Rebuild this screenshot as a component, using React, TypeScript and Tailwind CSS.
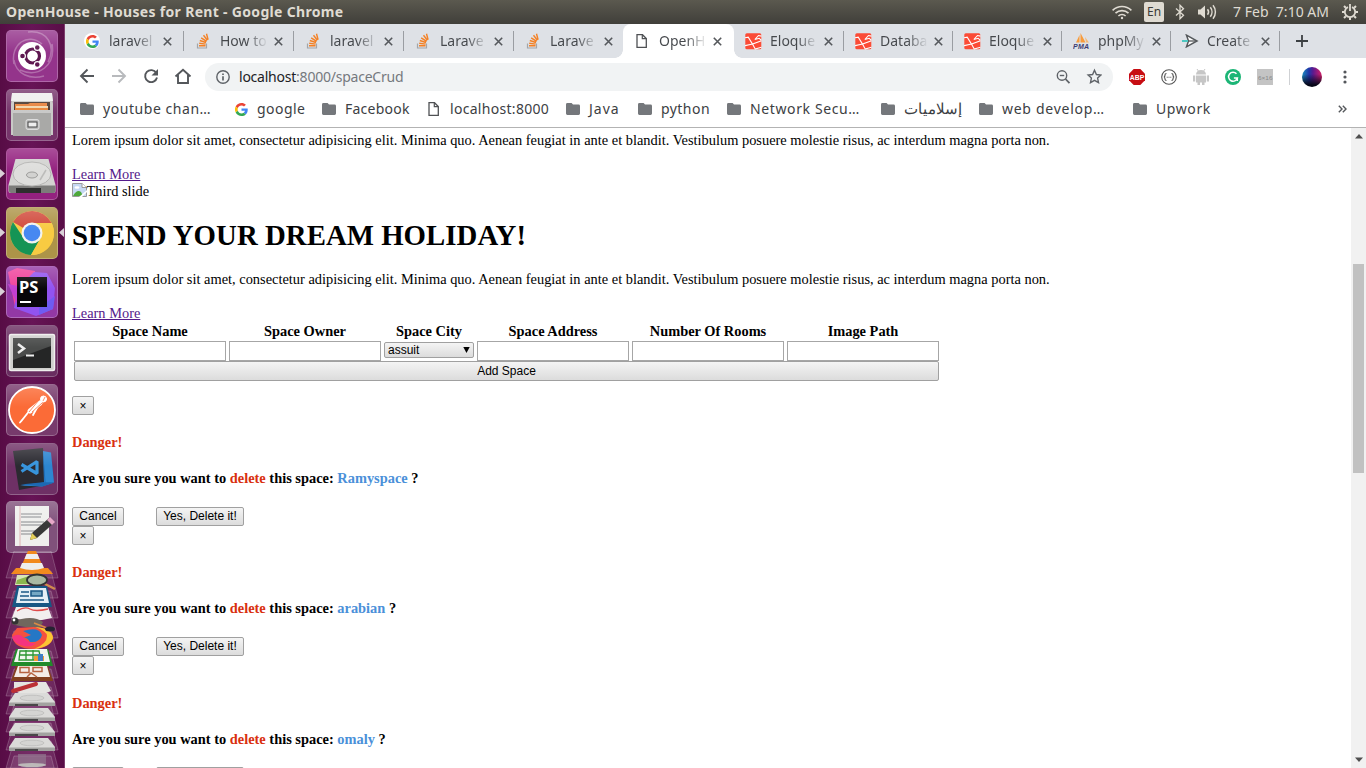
import React from "react";

const ui = "font-['Noto_Sans',sans-serif]";

function GoogleG({ size = 12 }: { size?: number }) {
  return (
    <svg width={size} height={size} viewBox="0 0 48 48" className="block shrink-0">
      <path fill="#EA4335" d="M24 9.5c3.5 0 6.700 1.200 9.200 3.600l6.900-6.900C35.900 2.400 30.500 0 24 0 14.600 0 6.500 5.400 2.600 13.200l8 6.200C12.400 13.700 17.700 9.500 24 9.500z" />
      <path fill="#4285F4" d="M47 24.500c0-1.600-.2-3.100-.4-4.500H24v9h12.900c-.6 3-2.200 5.500-4.700 7.200l7.700 6C44.400 38 47 31.800 47 24.500z" />
      <path fill="#FBBC05" d="M10.500 28.600a14.500 14.500 0 0 1 0-9.200l-8-6.200a24 24 0 0 0 0 21.600z" />
      <path fill="#34A853" d="M24 48c6.500 0 11.900-2.100 15.900-5.800l-7.700-6c-2.200 1.500-4.900 2.300-8.200 2.300-6.300 0-11.600-4.200-13.500-9.900l-8 6.200C6.500 42.600 14.600 48 24 48z" />
    </svg>
  );
}

function StackOverflow() {
  return (
    <svg width="14" height="16" viewBox="0 0 14 16" className="block">
      <path d="M1.500 10.500v4.500h9v-4.500" fill="none" stroke="#a3a6aa" strokeWidth="1.200" />
      <g stroke="#f48024" strokeWidth="1.400">
        <path d="M3 12.700h6.500M3.200 10.300l6.400.8M3.800 7.500l6.200 2M5.200 4.800l5.400 3.600M7.500 2.300l3.900 5M10.500.8l1.600 5.900" />
      </g>
    </svg>
  );
}

function LaravelIcon() {
  return (
    <svg width="17" height="17" viewBox="0 0 17 17" className="-ml-px block">
      <rect x=".3" y=".3" width="16" height="16" rx="1.500" fill="#fb4b36" />
      <path d="M0 4.800l3.200-.6L7.500 11l9-3.200M0 12.600l7.500-1.600 3 5.500M10.200 16l6.300-1.800M9.800 6.500l3.700-4 3 .6M9.800 6.500l4.400-1.200 2 1.800" fill="none" stroke="#fff" strokeWidth="1.100" />
    </svg>
  );
}

function PageIcon() {
  return (
    <svg width="12" height="14" viewBox="0 0 12 14" className="ml-px block">
      <path d="M1 .7h5.500L10.300 4.500v8.800H1z" fill="#fff" stroke="#4f5154" strokeWidth="1.300" />
      <path d="M6.300.7v4h4" fill="none" stroke="#4f5154" strokeWidth="1.200" />
    </svg>
  );
}

function PmaIcon() {
  return (
    <svg width="17" height="16" viewBox="0 0 17 16" className="-ml-px block">
      <path d="M3 9.500L6.500 2v7.500zM7.500 9.500V0l5 9.500z" fill="#f89c3c" />
      <path d="M12 4l4 5.500h-3z" fill="#f5b977" />
      <text x="0" y="15.500" textLength="16" fontSize="7" fontWeight="700" fontStyle="italic" fontFamily="Liberation Sans" fill="#3c3c72">PMA</text>
    </svg>
  );
}

function SendIcon() {
  return (
    <svg width="17" height="14" viewBox="0 0 17 14" className="-ml-px block">
      <path d="M4.500 1.200L15 7 4.500 12.800 6.500 7z" fill="#fff" stroke="#55595c" strokeWidth="1.500" />
      <path d="M3 7h11" stroke="#55595c" strokeWidth="1.300" />
      <path d="M0 7h6" stroke="#4ec6c0" strokeWidth="2" />
    </svg>
  );
}

function Folder() {
  return (
    <svg width="14" height="12" viewBox="0 0 14 12" className="block">
      <path d="M1.400 0h4.200L7 1.500h5.600A1.400 1.400 0 0 1 14 2.900v7.700a1.400 1.400 0 0 1-1.400 1.400H1.400A1.400 1.400 0 0 1 0 10.600V1.400A1.400 1.400 0 0 1 1.400 0z" fill="#74777b" />
    </svg>
  );
}

type Tab = { icon: React.ReactNode; title: string; w: string; active?: boolean; noline?: boolean };

const tabs: Tab[] = [
  {
    icon: <span className="-ml-px flex h-4 w-4 items-center justify-center rounded-full bg-white"><GoogleG size={13} /></span>,
    title: "laravel", w: "w-[111px]",
  },
  { icon: <StackOverflow />, title: "How to", w: "w-[110px]" },
  { icon: <StackOverflow />, title: "laravel", w: "w-[110px]" },
  { icon: <StackOverflow />, title: "Larave", w: "w-[110px]" },
  { icon: <StackOverflow />, title: "Larave", w: "w-[109px]", noline: true },
  { icon: <PageIcon />, title: "OpenH", w: "w-[111px]", active: true },
  { icon: <LaravelIcon />, title: "Eloque", w: "w-[110px]" },
  { icon: <LaravelIcon />, title: "Databa", w: "w-[109px]" },
  { icon: <LaravelIcon />, title: "Eloque", w: "w-[109px]" },
  { icon: <PmaIcon />, title: "phpMy", w: "w-[109px]" },
  { icon: <SendIcon />, title: "Create", w: "w-[109px]" },
];

function TabView({ t }: { t: Tab }) {
  return (
    <div className={`relative flex h-[34px] shrink-0 items-center ${t.w} ${t.active ? "rounded-t-lg bg-white" : ""}`}>
      {t.active && (
        <>
          <span className="absolute bottom-0 -left-2 h-2 w-2 bg-[radial-gradient(circle_at_0_0,transparent_7.500px,#fff_8px)]" />
          <span className="absolute bottom-0 -right-2 h-2 w-2 bg-[radial-gradient(circle_at_100%_0,transparent_7.500px,#fff_8px)]" />
        </>
      )}
      <span className="ml-[12px] flex w-[24px] shrink-0 items-center">{t.icon}</span>
      <span className="mb-[2px] w-[49px] shrink-0 overflow-hidden whitespace-nowrap bg-[linear-gradient(90deg,#45484c_55%,transparent_98%)] bg-clip-text text-[14px] text-transparent">
        {t.title}
      </span>
      <svg width="9" height="9" viewBox="0 0 9 9" className="ml-[5px] shrink-0">
        <path d="M.8.8l7.400 7.400M8.200.8L.8 8.200" stroke="#55585c" strokeWidth="1.600" />
      </svg>
      {!t.active && !t.noline && <span className="ml-auto h-5 w-px bg-[#9a9da2]" />}
    </div>
  );
}

function TopPanel() {
  return (
    <header className="flex h-6 items-center bg-gradient-to-b from-[#5b594f] to-[#403f3a] text-[#dfdbd2]">
      <span className="mb-[2px] ml-[6px] w-[1107px] whitespace-nowrap text-[14px] font-bold tracking-[0.320px]">OpenHouse - Houses for Rent - Google Chrome</span>
      <svg width="20" height="15" viewBox="0 0 20 15" fill="none" stroke="#dfdbd2" strokeWidth="1.600" className="-ml-px">
        <path d="M.6 5.300C6 .2 14 .2 19.400 5.300M3.500 8.200c3.700-3.500 9.300-3.500 13 0M6.400 11c2-1.900 5.200-1.900 7.200 0" />
        <circle cx="10" cy="13" r="1.200" fill="#dfdbd2" stroke="none" />
      </svg>
      <span className="ml-[12px] flex h-5 w-5 items-center justify-center rounded-[2px] bg-[#dfdbd2] text-[12px] leading-none text-[#3c3b37]">En</span>
      <svg width="10" height="16" viewBox="0 0 10 16" fill="none" stroke="#dfdbd2" strokeWidth="1.300" className="ml-[11px]">
        <path d="M1 4.500l7.500 6.800L5 14.800V1.200l3.500 3.500L1 11.500" />
      </svg>
      <svg width="21" height="16" viewBox="0 0 21 16" className="ml-[12px]">
        <path d="M1 5.500h2.500L8 1.500v13l-4.500-4H1z" fill="#dfdbd2" />
        <path d="M10.500 5.300c1.300 1.600 1.300 3.800 0 5.400M13.300 3.300c2.200 2.700 2.200 6.700 0 9.400M16 1.300c3.200 3.900 3.200 9.500 0 13.400" fill="none" stroke="#dfdbd2" strokeWidth="1.500" />
      </svg>
      <span className="mb-[2px] ml-[15px] w-[98px] whitespace-pre text-[14px] tracking-[0.020px]">7 Feb  7:10 AM</span>
      <svg width="18" height="18" viewBox="-9 -9 18 18" className="ml-[10px]" fill="none" stroke="#dfdbd2">
        <path d="M-2-4.800A5.200 5.200 0 1 0 2-4.800M0-8v7" strokeWidth="1.800" />
        <path d="M-4.200-4.200l-1.800-1.800M4.200-4.200L6-6M5.500 0H8M-5.500 0H-8M4.200 4.200L6 6M-4.200 4.200L-6 6M0 5.500V8" strokeWidth="2" />
      </svg>
    </header>
  );
}

function Tile({ children, bg, mb = "mb-[7px]" }: { children: React.ReactNode; bg: string; mb?: string }) {
  return (
    <div className={`relative ml-[6px] h-[52px] w-[52px] shrink-0 overflow-hidden rounded-[5px] border border-white/25 ${bg} ${mb}`}>
      <svg width="52" height="52" viewBox="0 0 52 52" className="-mt-px -ml-px block">{children}</svg>
      <span className="absolute inset-x-0 top-0 h-[22px] bg-gradient-to-b from-white/20 to-transparent" />
    </div>
  );
}

function Launcher() {
  const rows = [551, 571, 591, 611, 631, 651, 669, 687, 705, 723, 741, 756];
  return (
    <aside className="relative flex h-[744px] w-[65px] shrink-0 flex-col overflow-hidden border-r border-[#7d3d6d] bg-gradient-to-r from-[#570c45] via-[#671456] to-[#590e47] pt-[6px]">
      <Tile bg="bg-[#94348b]">
        <g fill="none" stroke="#fff" strokeOpacity=".28" strokeWidth="1.500">
          <path d="M8 34C4 14 22 2 36 14M22 2c20-2 28 14 20 30M46 14c4 22-14 34-32 26M8 30c2 14 16 20 30 16" />
        </g>
        <circle cx="26" cy="26" r="14" fill="#fff" />
        <circle cx="26.500" cy="26" r="7" fill="none" stroke="#5e1750" strokeWidth="3.200" />
        <g fill="#5e1750" stroke="#fff" strokeWidth="1.200"><circle cx="16.500" cy="26" r="2.900" /><circle cx="31.300" cy="17.500" r="2.900" /><circle cx="31.300" cy="34.500" r="2.900" /></g>
      </Tile>
      <Tile bg="bg-[#76356b]">
        <path d="M6 5h40l1 10v31H5V15z" fill="#c9c9c7" />
        <path d="M6 4h40l1 8H5z" fill="#efefed" />
        <rect x="8" y="13" width="36" height="10" fill="#4d3b31" />
        <path d="M9 15h13l2-1h17v8H9z" fill="#e8843e" /><path d="M10 17h32v4H10z" fill="#f3d7ad" /><path d="M10 19h32v2H10z" fill="#e7863b" />
        <path d="M7 21h38v26H7z" fill="#a9a9a7" /><path d="M7 21h38v3H7z" fill="#c9c9c8" />
        <rect x="20" y="30.500" width="13" height="10" rx="2" fill="#bdbdbd" stroke="#ddd" />
        <rect x="22" y="33" width="9" height="5" fill="#eee" stroke="#444" />
      </Tile>
      <Tile bg="bg-[#94217f]">
        <path d="M9.500 11h33l7 26v6q0 2-2 2h-43q-2 0-2-2v-6z" fill="#d3d3d1" />
        <path d="M3 37.500h46.500V43q0 2-2 2h-42.500q-2 0-2-2z" fill="#7c7c7a" />
        <path d="M10 40h25v5H10z" fill="#2e2e2e" />
        <ellipse cx="26" cy="26" rx="19" ry="12" fill="#dededc" stroke="#b5b5b3" />
        <ellipse cx="26" cy="27" rx="5.500" ry="3" fill="#d2d2d0" stroke="#9d9d9b" />
        <path d="M40 22l-6 10" stroke="#bcbcba" strokeWidth="1.500" />
      </Tile>
      <Tile bg="bg-[#ad9448]">
        <circle cx="26" cy="26" r="22" fill="#f8cb42" />
        <path d="M26 26L7 15A22 22 0 0 1 45.600 16H26z" fill="#d14b3d" />
        <path d="M7 15A22 22 0 0 0 25 48l10-17-9-5-8.500 5z" fill="#159455" />
        <path d="M26 16h19.600A22 22 0 0 1 25 48l9.500-17z" fill="#f8cb42" />
        <circle cx="26" cy="26" r="10.500" fill="#f3f3ee" /><circle cx="26" cy="26" r="8.300" fill="#4688f1" />
      </Tile>
      <Tile bg="bg-[#9338a5]">
        <path d="M2 6l9-4 18 3 1 15-21 21z" fill="#f0429b" />
        <path d="M28 6l13 1 8 15-2 21-17 7-22-8 4-20z" fill="#9153f0" />
        <path d="M2 18l10 2v20z" fill="#c23fd0" /><path d="M33 42l16-12-2 13-14 6z" fill="#6e5cf2" />
        <rect x="11" y="11" width="30" height="30" fill="#08060a" />
        <text x="13" y="27" fontFamily="Noto Sans" fontWeight="700" fontSize="16.500" fill="#fff">PS</text>
        <rect x="14" y="35" width="11" height="2" fill="#fff" />
      </Tile>
      <Tile bg="bg-[#692d60]">
        <rect x="3.500" y="9.500" width="45" height="36" rx="1.500" fill="#cfcfcd" stroke="#efefed" strokeWidth="1.500" />
        <rect x="7" y="13" width="38" height="30" fill="#252626" />
        <path d="M7 13h38v8L7 35z" fill="#4a4c4b" />
        <path d="M12 19l6 4.500-6 4.500" fill="none" stroke="#eee" strokeWidth="2.500" /><path d="M20 30.500h8" stroke="#eee" strokeWidth="2" />
      </Tile>
      <Tile bg="bg-[#773a6c]">
        <circle cx="26" cy="26" r="23" fill="#fb6b37" stroke="#fff" strokeWidth="1.800" />
        <g stroke="#fff" fill="none" strokeLinecap="round"><circle cx="37.500" cy="15" r="3" fill="#fff" /><path d="M34 19L24 27" strokeWidth="5" /><path d="M32 22l-5 9M24 26L15 37.500M21 30L14 38.500" strokeWidth="1.800" /></g>
        <path d="M33 16l-10 12M36 19l-10 9M39 13l-2 4" stroke="#fb6b37" strokeWidth=".8" />
      </Tile>
      <Tile bg="bg-[#6e3065]" mb="mb-[6px]">
        <path d="M7 8l30-3 3 37-27 5z" fill="#2b2a31" />
        <path d="M37 8l8 1.500 3 30-12 4-22-1 24-3z" fill="#2d86d0" /><path d="M37 8l2.500 31-25 2.500 22 2 12-4-10-.5z" fill="#1c69b2" />
        <path d="M15.500 21.500l15.500 9V18.500l-15.500 10" fill="none" stroke="#3794dc" strokeWidth="3.200" strokeLinejoin="bevel" />
      </Tile>
      <Tile bg="bg-[#80517b]" mb="-mb-[2px]">
        <path d="M9 5h34v40H9z" fill="#efefed" />
        <path d="M14 5v40" stroke="#dfb3b3" />
        <path d="M15 13h21M15 16h20M15 21h23M15 24h20M15 30h15M15 33h12" stroke="#a9aaac" strokeWidth="1.300" />
        <path d="M24 39l2-7 17-15 5 5-17 15z" fill="#383838" /><path d="M24 39l2-7 5 5z" fill="#e5cf59" /><path d="M41 19l3-3 5 5-3 3z" fill="#e6a6c7" />
      </Tile>
      <svg width="65" height="217" viewBox="0 551 65 217" className="relative block shrink-0">
        {rows.map((y) => (
          <path key={y} d={`M14 ${y}h37l7 27H6z`} fill="#fff" fillOpacity=".1" stroke="#fff" strokeOpacity=".2" />
        ))}
        <path d="M16 568h32l5 6H11z" fill="#f28a1e" /><path d="M28 551h8l8 18q-12 5-24 0z" fill="#f28a1e" />
        <path d="M26.500 554h11l2 5h-15zM22 563h20l2 5q-12 4-24 0z" fill="#eee" />
        <path d="M17 575h26l3 10H15z" fill="#d8e6b8" /><path d="M17 580l12-4 6 8H16z" fill="#8bb64e" />
        <path d="M43 583l12 6" stroke="#d18b4e" strokeWidth="2.500" /><ellipse cx="37" cy="580" rx="10" ry="5.500" fill="#a9b9a3" stroke="#333" strokeWidth="1.800" />
        <path d="M17 586h30l5 21H12z" fill="#175784" /><path d="M19 588h27l3 15H16z" fill="#e5eff6" /><path d="M21 592h8M20 596h9M20 600h24M31 591h11v5H31z" stroke="#1d5987" strokeWidth="1.600" fill="#75a8c4" />
        <path d="M16 607h32l4 11q-20 5-40 0z" fill="#f2eeee" /><path d="M17 611q8-5 13-2t18 0" fill="none" stroke="#df4949" strokeWidth="1.300" />
        <path d="M12 622q20-8 31 0l-3 6q-16 0-28-4z" fill="#70675d" /><circle cx="15" cy="621" r="3.500" fill="#333" /><circle cx="14" cy="620" r="1.400" fill="#fff" />
        <path d="M12 635l5-7 17-1q17 1 19 10-2 11-19 12-21 0-22-14z" fill="#f4513f" /><path d="M35 627q17 1 18 11-2 9-19 11 13-5 13-13 0-5-12-9z" fill="#fbc533" /><path d="M23 631q16-5 19 4-2 8-12 7-3-5-7-4l8-3z" fill="#2577c5" /><path d="M12 637q7-5 12 1 5 6 12 5-5 5-12 3-10-2-12-9z" fill="#f5337f" />
        <path d="M34 623l13 5" stroke="#d98b45" strokeWidth="1.800" /><ellipse cx="50" cy="629" rx="5" ry="2.500" fill="#252231" />
        <path d="M16 649h32l5 17H11z" fill="#218b2a" /><path d="M18 649h29l3 13H14z" fill="#f2f7f0" /><path d="M20 651h19l2 9H19zM20 655h20M26 650v10M33 650v10" fill="none" stroke="#2c9632" strokeWidth="1.300" /><path d="M34 656h10v5H34z" fill="#f39b38" /><path d="M38 654h5v7h-5z" fill="#407fc5" />
        <path d="M16 666h32l5 15H11z" fill="#83401e" /><path d="M18 666h29l3 11H14z" fill="#f4ece6" /><path d="M20 667.500h9v5H20zM33 667.500h9v4h-9zM27 677l4-4 6 4" fill="none" stroke="#b66340" strokeWidth="1.500" />
        <path d="M14 682h32l5 9-7 3-22 1-8-5z" fill="#e5e4e1" /><path d="M13 691l23-7" stroke="#bc3035" strokeWidth="4" strokeLinecap="round" />
        {[693, 708, 723, 738].map((y) => (
          <g key={y}>
            <path d={`M15 ${y}h33l7 9v4H9v-4z`} fill="#dbdbd9" />
            <path d={`M9 ${y + 9.5}h46v3.500H9z`} fill="#a2a2a0" /><path d={`M15 ${y + 11}h23v2H15z`} fill="#484848" />
            <ellipse cx="32" cy={y + 5} rx="12" ry="2.800" fill="#d4d4d2" stroke="#b8b8b6" strokeWidth=".7" />
          </g>
        ))}
        <path d="M18 754h28v11q-14 7-28 0z" fill="#92778f" fillOpacity=".7" /><ellipse cx="32" cy="765" rx="14" ry="2" fill="#bcb9b9" />
      </svg>
      <svg width="65" height="744" viewBox="0 24 65 744" className="absolute top-0 left-0">
        <path d="M0 169v9l5-4.500zM0 228v9l5-4.500zM0 287v9l5-4.500zM64 228v9l-5-4.500z" fill="#d9d0d7" />
      </svg>
    </aside>
  );
}

function Toolbar() {
  return (
    <div className="flex h-[37px] shrink-0 items-center bg-white">
      <svg width="128" height="20" viewBox="72 67 128 20" className="ml-[7px] shrink-0" fill="none" stroke="#54575b" strokeWidth="1.900">
        <path d="M94 76H81.500M87.500 69.500L81 76l6.500 6.500" />
        <path d="M112 76h12.500M118.500 69.500L125 76l-6.500 6.500" stroke="#b8babd" />
        <path d="M156.300 73A6 6 0 1 0 157 77.500" />
        <path d="M158 69v6.500h-6.500z" fill="#54575b" stroke="none" />
        <path d="M175.500 76.500l7.500-6.800 7.500 6.800M178 75v8h10v-8" />
      </svg>
      <div className="ml-[5px] flex h-7 w-[908px] shrink-0 items-center rounded-full bg-[#f1f3f4]">
        <svg width="14" height="14" viewBox="0 0 14 14" className="ml-[11px]" fill="none" stroke="#5f6368" strokeWidth="1.400">
          <circle cx="7" cy="7" r="6.200" /><path d="M7 6.200v4.300M7 3.500v1.600" strokeWidth="1.700" />
        </svg>
        <span className="ml-[9px] whitespace-nowrap text-[14px] tracking-[-0.230px] text-[#202124]">localhost<span className="text-[#75797e]">:8000/spaceCrud</span></span>
        <svg width="46" height="18" viewBox="0 0 46 18" className="mr-[11px] ml-auto" fill="none" stroke="#5f6368" strokeWidth="1.400">
          <circle cx="6" cy="7.500" r="4.700" /><path d="M9.500 11l4 4.200" strokeWidth="1.800" /><path d="M3.800 7.500h4.400" />
          <path d="M38.500 2.300l1.900 4.200 4.500.5-3.300 3.100.9 4.500-4-2.300-4 2.300.9-4.500-3.300-3.100 4.500-.5z" />
        </svg>
      </div>
      <svg width="160" height="20" viewBox="1120 67 160 20" className="ml-[7px] shrink-0">
        <path d="M1133.700 69h6.600l4.700 4.700v6.600l-4.700 4.700h-6.600l-4.700-4.700v-6.600z" fill="#c70d13" />
        <text x="1129.800" y="79.900" fontSize="8" fontWeight="700" fontFamily="Liberation Sans" fill="#fff" textLength="14.400" lengthAdjust="spacingAndGlyphs">ABP</text>
        <circle cx="1169" cy="77" r="7.300" fill="#fff" stroke="#555" strokeWidth="1.100" />
        <path d="M1166.500 73.500q-1.500 0-1.500 1.500 0 2-1.200 2 1.200 0 1.200 2 0 1.500 1.500 1.500M1171.500 73.500q1.500 0 1.500 1.500 0 2 1.200 2-1.200 0-1.200 2 0 1.500-1.500 1.500" stroke="#555" fill="none" strokeWidth="1.200" />
        <path d="M1166.700 76.700h1v1h-1zM1168.500 76.700h1v1h-1zM1170.300 76.700h1v1h-1z" fill="#555" />
        <g fill="#c6c6c6"><path d="M1196 74.500a5 4.500 0 0 1 10 0zM1196 75.500h10v7h-10zM1193 75.500h2.200v6H1193zM1206.800 75.500h2.200v6h-2.200zM1197.500 82h2.500v3h-2.500zM1202 82h2.500v3h-2.500z" /><path d="M1197 69l2 3M1205 69l-2 3" stroke="#c6c6c6" /></g>
        <circle cx="1233" cy="77" r="8" fill="#1cb576" />
        <path d="M1236.500 73.800a4.500 4.500 0 1 0 .9 4.200h-3.500M1237.300 78v3" fill="none" stroke="#fff" strokeWidth="1.500" />
        <rect x="1257" y="69" width="16" height="16" fill="#c4c4c4" />
        <text x="1258" y="80" fontSize="6" fontFamily="Liberation Sans" fill="#888" textLength="14.500" lengthAdjust="spacingAndGlyphs">6×16</text>
      </svg>
      <span className="ml-[9px] h-4 w-px bg-[#cfd1d4]" />
      <span className="ml-[12px] h-5 w-5 rounded-full bg-[linear-gradient(180deg,transparent_35%,#060616_90%),linear-gradient(90deg,#1a8fc0,#2036a8_35%,#5a1a8e_55%,#d81e66)]" />
      <svg width="4" height="14" viewBox="0 0 4 14" className="ml-[21px]" fill="#54575b"><circle cx="2" cy="2" r="1.600" /><circle cx="2" cy="7" r="1.600" /><circle cx="2" cy="12" r="1.600" /></svg>
    </div>
  );
}

const bookmarks: { icon: React.ReactNode; label: string; w: string; t: string }[] = [
  { icon: <Folder />, label: "youtube chan…", w: "w-[155px]", t: "tracking-[0.550px]" },
  { icon: <GoogleG size={13} />, label: "google", w: "w-[87px]", t: "tracking-[0.450px] -ml-px" },
  { icon: <Folder />, label: "Facebook", w: "w-[105px]", t: "tracking-[0.250px]" },
  { icon: <PageIcon />, label: "localhost:8000", w: "w-[139px]", t: "tracking-[0.300px]" },
  { icon: <Folder />, label: "Java", w: "w-[72px]", t: "tracking-[1px]" },
  { icon: <Folder />, label: "python", w: "w-[89px]", t: "tracking-[0.450px]" },
  { icon: <Folder />, label: "Network Secu…", w: "w-[154px]", t: "tracking-[0.620px]" },
  { icon: <Folder />, label: "إسلاميات", w: "w-[98px]", t: "text-[15.2px] leading-5" },
  { icon: <Folder />, label: "web develop…", w: "w-[154px]", t: "tracking-[0.720px]" },
  { icon: <Folder />, label: "Upwork", w: "w-[90px]", t: "tracking-[0.600px]" },
];

function Bookmarks() {
  return (
    <nav className="flex h-[33px] shrink-0 items-center border-b border-[#b3b3b3] bg-white pb-[4px] pl-[15px] text-[14px] text-[#3c4043]">
      {bookmarks.map((b) => (
        <span key={b.label} className={`flex shrink-0 items-center whitespace-nowrap ${b.w}`}>
          <span className="w-[23px] shrink-0">{b.icon}</span>
          <span className={`mb-[2px] ${b.t}`}>{b.label}</span>
        </span>
      ))}
      <svg width="9" height="8" viewBox="0 0 9 8" className="ml-[115px]" fill="none" stroke="#54575b" strokeWidth="1.400"><path d="M.8.8L4 4 .8 7.200M4.800.8L8 4 4.800 7.200" /></svg>
    </nav>
  );
}

const btn =
  "box-border flex shrink-0 items-center justify-center whitespace-nowrap rounded-[2px] border border-[#a0a0a0] bg-gradient-to-b from-[#f4f4f4] to-[#dcdcdc] font-['Liberation_Sans',sans-serif] text-[12px] leading-none text-black";

const lorem =
  "Lorem ipsum dolor sit amet, consectetur adipisicing elit. Minima quo. Aenean feugiat in ante et blandit. Vestibulum posuere molestie risus, ac interdum magna porta non.";

function DeleteDialog({ name }: { name: string }) {
  return (
    <section className="h-[130.200px] shrink-0">
      <button className={`${btn} h-[19px] w-[22px]`}>×</button>
      <h4 className="mt-[19.200px] h-[17px] font-bold leading-[17px] text-[#d9300f]">Danger!</h4>
      <h4 className="mt-[19.100px] h-[17px] font-bold leading-[17px]">
        Are you sure you want to <span className="text-[#d9300f]">delete</span> this space: <span className="text-[#4a90d9]">{name}</span> ?
      </h4>
      <div className="mt-[19.400px] flex gap-8">
        <button className={`${btn} h-[19px] w-[52px] pb-px`}>Cancel</button>
        <button className={`${btn} h-[19px] w-[88px] pb-px`}>Yes, Delete it!</button>
      </div>
    </section>
  );
}

const columns = ["Space Name", "Space Owner", "Space City", "Space Address", "Number Of Rooms", "Image Path"];

function Page() {
  return (
    <div className="flex h-[640px] bg-white">
      <main className="flex h-[640px] w-[1286px] flex-col overflow-hidden pt-[4px] pl-[7px] font-['Liberation_Serif',serif] text-[14.4px] leading-[17px] text-black">
        <p className="mb-[17px] shrink-0 tracking-[0.007px]">{lorem}</p>
        <a className="shrink-0 text-[#551a8b] underline">Learn More</a>
        <div className="flex h-[17px] shrink-0">
          <svg width="15" height="14" viewBox="0 0 15 14" className="shrink-0">
            <path d="M.5.500h9.500l4.500 4V13.500H.5z" fill="#c6d8f3" stroke="#9a9a9a" />
            <path d="M10 .5v4h4.500" fill="#fff" stroke="#9a9a9a" /><ellipse cx="5" cy="4.500" rx="2.500" ry="1.300" fill="#fff" />
            <path d="M1 13q4-7 8-4l2 4z" fill="#4ea83a" /><path d="M7 14l8-7v2l-5 5z" fill="#fff" />
          </svg>
          <span className="-ml-[0.600px]">Third slide</span>
        </div>
        <h1 className="mt-[19px] h-[33px] shrink-0 text-[28.8px] font-bold leading-[33px] tracking-[0.040px]">SPEND YOUR DREAM HOLIDAY!</h1>
        <p className="mt-[19px] mb-[17px] shrink-0 tracking-[0.007px]">{lorem}</p>
        <a className="shrink-0 text-[#551a8b] underline">Learn More</a>
        <div className="mt-px ml-[2px] grid w-[865px] shrink-0 grid-cols-[152px_152px_90px_152px_152px_152px] gap-x-[3px]">
          {columns.map((c) => (
            <div key={c} className="mb-px h-[17px] text-center font-bold">{c}</div>
          ))}
          {columns.map((c) =>
            c === "Space City" ? (
              <div key={c} className="mt-px flex h-4 items-center justify-between rounded-[2px] border border-[#a0a0a0] bg-gradient-to-b from-[#f4f4f4] to-[#dcdcdc] px-[3px] font-['Liberation_Sans',sans-serif] text-[12px] leading-none">
                <span>assuit</span>
                <svg width="7" height="6" viewBox="0 0 7 6"><path d="M.3 0h6.400L3.500 6z" /></svg>
              </div>
            ) : (
              <input key={c} aria-label={c} className="h-5 w-[152px] border border-[#a6a6a6] bg-white" />
            ),
          )}
          <button className={`${btn} col-span-6 h-5`}>Add Space</button>
        </div>
        <div className="mt-[15px] flex shrink-0 flex-col">
          <DeleteDialog name="Ramyspace" />
          <DeleteDialog name="arabian" />
          <DeleteDialog name="omaly" />
        </div>
      </main>
      <div className="flex w-[15px] shrink-0 flex-col items-center bg-[#f1f1f1]">
        <svg width="8" height="5" viewBox="0 0 8 5" className="mt-[6px] shrink-0"><path d="M0 4.500L4 0l4 4.500z" fill="#4f4f4f" /></svg>
        <span className="mt-[125px] h-[209px] w-[11px] shrink-0 bg-[#c1c1c1]" />
        <svg width="8" height="5" viewBox="0 0 8 5" className="mt-auto mb-[6px] shrink-0"><path d="M0 .5h8L4 5z" fill="#4f4f4f" /></svg>
      </div>
    </div>
  );
}

export default function App() {
  return (
    <div className={`h-[768px] w-[1366px] overflow-hidden bg-white ${ui}`}>
      <TopPanel />
      <div className="flex h-[744px]">
        <Launcher />
        <div className="flex w-[1301px] flex-col">
          <div className="flex h-[34px] shrink-0 items-center bg-[#dee1e6] pl-[8px]">
            {tabs.map((t, i) => (
              <TabView key={i} t={t} />
            ))}
            <svg width="12" height="12" viewBox="0 0 12 12" className="ml-[16px]" stroke="#3c4043" strokeWidth="1.800"><path d="M0 6h12M6 0v12" /></svg>
          </div>
          <Toolbar />
          <Bookmarks />
          <Page />
        </div>
      </div>
    </div>
  );
}
